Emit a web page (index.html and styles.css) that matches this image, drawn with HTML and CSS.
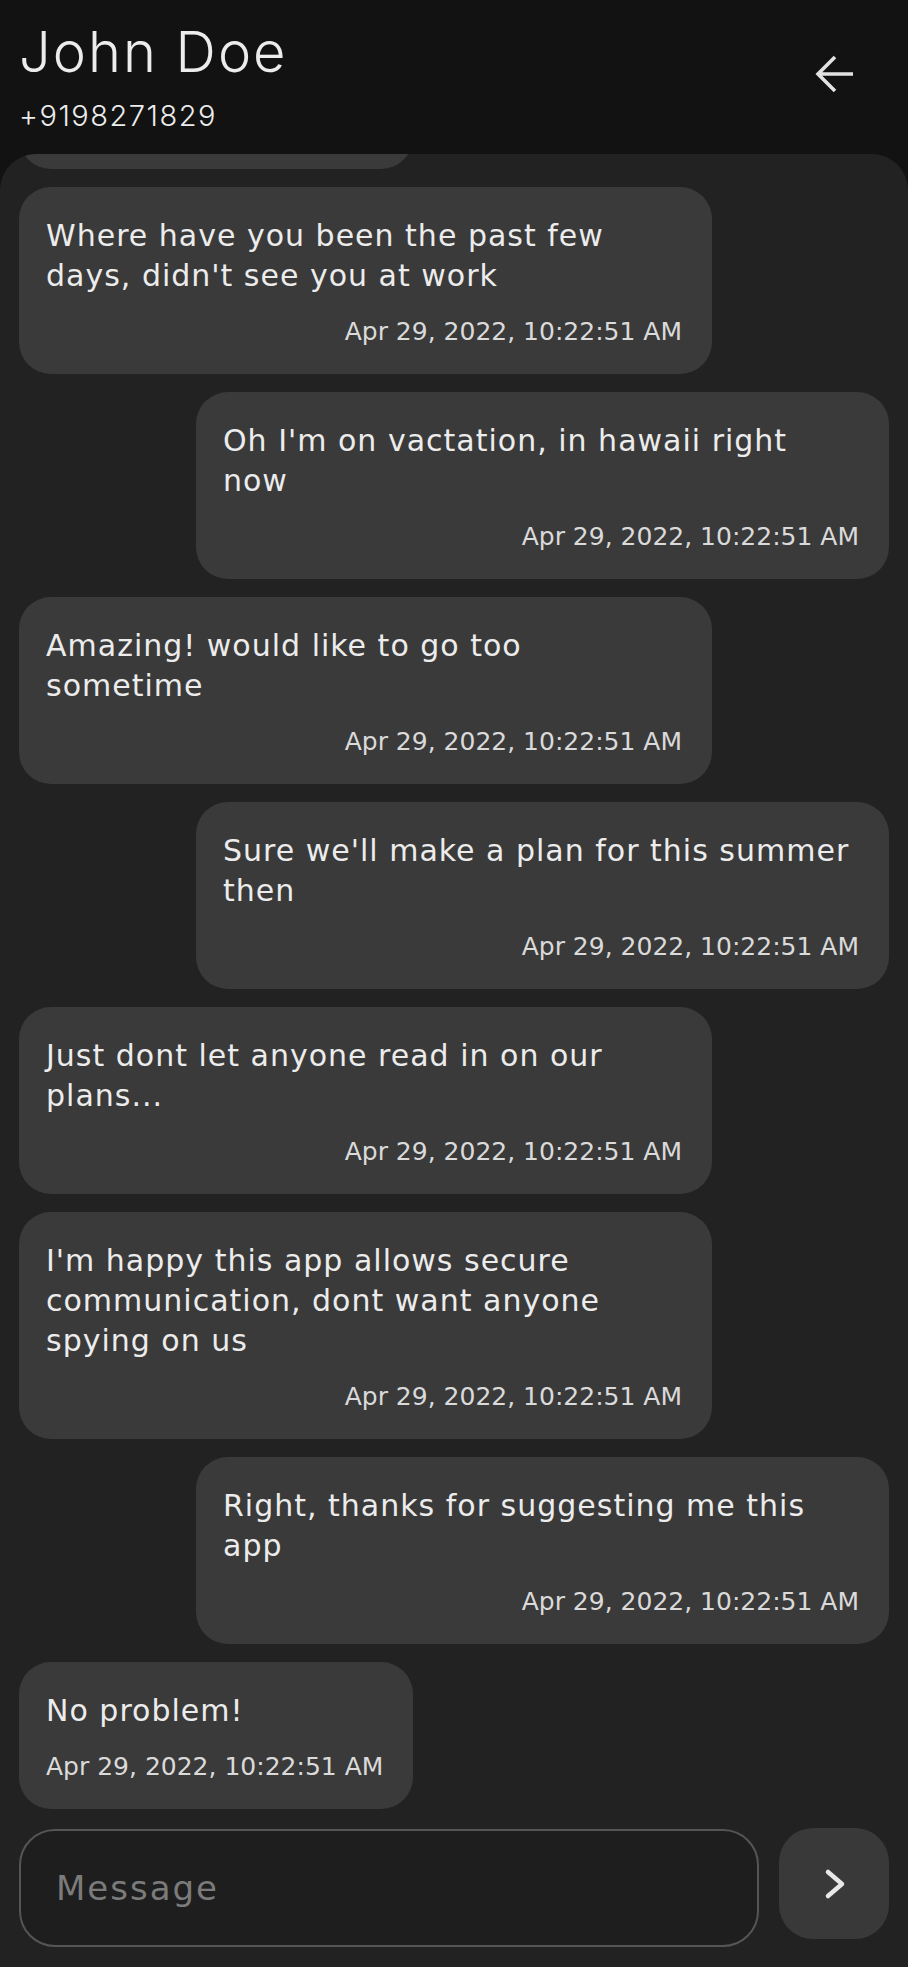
FILE: index.html
```html
<!DOCTYPE html>
<html lang="en">
<head>
<meta charset="utf-8">
<title>John Doe</title>
<link rel="stylesheet" href="styles.css">
</head>
<body>
<div class="app">
  <header class="topbar">
    <div class="contact">
      <h1 class="name">John Doe</h1>
      <div class="phone">+9198271829</div>
    </div>
    <button class="back" aria-label="Back">
      <svg width="56" height="56" viewBox="0 0 56 56"><path d="M12 28H47M29 11L12 28L29 45" fill="none" stroke="#e2e2e2" stroke-width="3.6"/></svg>
    </button>
  </header>
  <main class="chat">
    <div class="messages">
      <div class="bubble in"><p class="text">Hey there!</p><span class="stamp">Apr 29, 2022, 10:22:51 AM</span></div>
      <div class="bubble in"><p class="text">Where have you been the past few days, didn't see you at work</p><span class="stamp">Apr 29, 2022, 10:22:51 AM</span></div>
      <div class="bubble out"><p class="text">Oh I'm on vactation, in hawaii right now</p><span class="stamp">Apr 29, 2022, 10:22:51 AM</span></div>
      <div class="bubble in"><p class="text">Amazing! would like to go too sometime</p><span class="stamp">Apr 29, 2022, 10:22:51 AM</span></div>
      <div class="bubble out"><p class="text">Sure we'll make a plan for this summer then</p><span class="stamp">Apr 29, 2022, 10:22:51 AM</span></div>
      <div class="bubble in"><p class="text">Just dont let anyone read in on our plans...</p><span class="stamp">Apr 29, 2022, 10:22:51 AM</span></div>
      <div class="bubble in"><p class="text">I'm happy this app allows secure communication, dont want anyone spying on us</p><span class="stamp">Apr 29, 2022, 10:22:51 AM</span></div>
      <div class="bubble out"><p class="text">Right, thanks for suggesting me this app</p><span class="stamp">Apr 29, 2022, 10:22:51 AM</span></div>
      <div class="bubble in"><p class="text">No problem!</p><span class="stamp">Apr 29, 2022, 10:22:51 AM</span></div>
    </div>
    <form class="composer">
      <input class="field" type="text" placeholder="Message">
      <button class="send" type="button" aria-label="Send">
        <svg width="110" height="111" viewBox="0 0 110 111"><path d="M49 44L63 56L49 68" fill="none" stroke="#e8e8e8" stroke-width="4.5" stroke-linecap="round" stroke-linejoin="round"/></svg>
      </button>
    </form>
  </main>
</div>
</body>
</html>
```

FILE: styles.css
```css
html, body {
  margin: 0;
  padding: 0;
}
body {
  background: #121212;
  color: #e8e8e8;
  font-family: "DejaVu Sans", Inter, sans-serif;
}
.app {
  display: flex;
  flex-direction: column;
  height: 100vh;
}
.topbar {
  flex-shrink: 0;
  height: 154px;
  box-sizing: border-box;
  padding: 17px 46px 0 19px;
  display: flex;
  justify-content: space-between;
  align-items: flex-start;
  font-family: Inter, "DejaVu Sans", sans-serif;
}
.name {
  margin: 0;
  font-size: 56px;
  line-height: 70px;
  font-weight: 300;
  letter-spacing: 2px;
  color: #ececec;
}
.phone {
  margin-top: 11px;
  font-size: 29px;
  line-height: 36px;
  font-weight: 300;
  letter-spacing: 1.5px;
  color: #ececec;
}
.back {
  margin-top: 29px;
  width: 56px;
  height: 56px;
  padding: 0;
  border: 0;
  background: none;
  display: block;
}
.back svg { display: block; }
.chat {
  flex: 1;
  min-height: 0;
  background: #222222;
  border-radius: 36px 36px 0 0;
  display: flex;
  flex-direction: column;
  overflow: hidden;
}
.messages {
  flex: 1;
  min-height: 0;
  overflow: hidden;
  display: flex;
  flex-direction: column;
  justify-content: flex-end;
  gap: 18px;
  padding: 0 19px;
}
.bubble {
  flex-shrink: 0;
  max-width: 693px;
  box-sizing: border-box;
  background: #3a3a3a;
  border-radius: 32px;
  padding: 29px 33px 27px 27px;
  display: flex;
  flex-direction: column;
}
.bubble.in { align-self: flex-start; }
.bubble.out { align-self: flex-end; }
.text {
  margin: 0;
  font-size: 30px;
  line-height: 40px;
  letter-spacing: 1px;
  color: #ececec;
}
.stamp {
  align-self: flex-end;
  margin: 21px -3px 0 0;
  font-size: 25px;
  line-height: 30px;
  color: #dadada;
}
.composer {
  flex-shrink: 0;
  display: flex;
  align-items: flex-start;
  gap: 20px;
  padding: 20px 19px;
  margin: 0;
}
.field {
  flex: 1;
  min-width: 0;
  height: 118px;
  box-sizing: border-box;
  border: 2px solid #555555;
  border-radius: 36px;
  background: #1e1e1e;
  padding: 0 20px 0 35px;
  font-family: "DejaVu Sans", Inter, sans-serif;
  font-size: 34px;
  letter-spacing: 2px;
  color: #e8e8e8;
  outline: none;
}
.field::placeholder { color: #7b7b7b; }
.send {
  flex-shrink: 0;
  width: 110px;
  height: 111px;
  margin-top: -1px;
  padding: 0;
  border: 0;
  border-radius: 34px;
  background: #393939;
  display: block;
}
.send svg { display: block; }
```
